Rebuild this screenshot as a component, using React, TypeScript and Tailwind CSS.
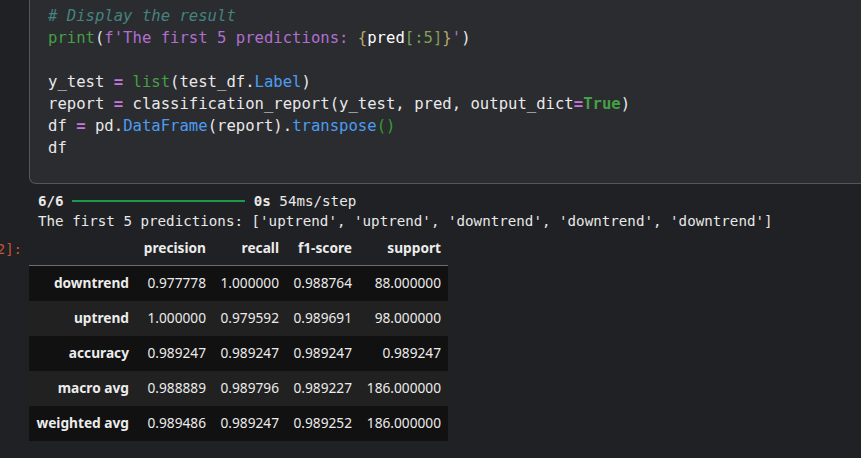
import React from 'react'

const codeFont = { fontFamily: '"DejaVu Sans Mono", "Liberation Mono", monospace' }
const outFont = { fontFamily: '"DejaVu Sans Mono", "Liberation Mono", monospace' }
const tableFont = { fontFamily: '"Noto Sans", "Open Sans", Roboto, sans-serif' }

const rows = [
  ['downtrend', '0.977778', '1.000000', '0.988764', '88.000000'],
  ['uptrend', '1.000000', '0.979592', '0.989691', '98.000000'],
  ['accuracy', '0.989247', '0.989247', '0.989247', '0.989247'],
  ['macro avg', '0.988889', '0.989796', '0.989227', '186.000000'],
  ['weighted avg', '0.989486', '0.989247', '0.989252', '186.000000'],
]

const colWidths = ['w-[107px]', 'w-[77px]', 'w-[73px]', 'w-[73px]', 'w-[89px]']

function CodeCell() {
  return (
    <div className="ml-[29px] -mr-[4px] border-l border-b border-[#54565b] rounded-bl-[7px] bg-[#2b2c30] pt-[5px] pb-[24px] pl-[18px]">
      <pre className="text-[15.6px] leading-[22px] text-[#e9e9e9] m-0 font-medium" style={codeFont}>
        <span className="italic text-[#44837f]"># Display the result</span>
        {'\n'}
        <span className="text-[#45a045]">print</span>
        <span>(</span>
        <span className="text-[#b26fd0]">f'The first 5 predictions: </span>
        <span className="text-[#b5a86a]">{'{'}</span>
        <span className="text-white">pred</span>
        <span className="text-[#7f9f55]">[:5]</span>
        <span className="text-[#b5a86a]">{'}'}</span>
        <span className="text-[#b26fd0]">'</span>
        <span>)</span>
        {'\n\n'}
        <span>y_test </span>
        <span className="text-[#c678dd] font-bold">=</span>
        <span> </span>
        <span className="text-[#45a045]">list</span>
        <span>(test_df.</span>
        <span className="text-[#4b9df2]">Label</span>
        <span>)</span>
        {'\n'}
        <span>report </span>
        <span className="text-[#c678dd] font-bold">=</span>
        <span> classification_report(y_test, pred, output_dict</span>
        <span className="text-[#c678dd] font-bold">=</span>
        <span className="text-[#45a045] font-bold">True</span>
        <span>)</span>
        {'\n'}
        <span>df </span>
        <span className="text-[#c678dd] font-bold">=</span>
        <span> pd.</span>
        <span className="text-[#4b9df2]">DataFrame</span>
        <span>(report).</span>
        <span className="text-[#4b9df2]">transpose</span>
        <span className="text-[#30a030]">()</span>
        {'\n'}
        <span>df</span>
      </pre>
    </div>
  )
}

function Output() {
  return (
    <div className="pl-[38px] pt-[7px] text-[14.2px] leading-[20px] text-[#e8e8e8] whitespace-pre" style={outFont}>
      <div className="flex items-center">
        <span className="font-bold">6/6</span>
        <span> </span>
        <span className="inline-block w-[173px] h-[2px] bg-[#1a9a4a]" />
        <span> </span>
        <span className="font-bold">0s</span>
        <span> 54ms/step</span>
      </div>
      <div>The first 5 predictions: ['uptrend', 'uptrend', 'downtrend', 'downtrend', 'downtrend']</div>
    </div>
  )
}

function ReportTable() {
  return (
    <div className="flex mt-[1px]">
      <div className="w-[29px] overflow-hidden flex justify-end pr-[7px] pt-[7px] h-[34px]">
        <span className="text-[14px] leading-[20px] text-[#c2563a] whitespace-nowrap" style={outFont}>[2]:</span>
      </div>
      <div className="text-[13.7px] text-[#ececec]" style={tableFont}>
        <div className="flex h-[34px] border-b border-[#6b6b6b] items-center font-bold">
          <div className={colWidths[0]} />
          {['precision', 'recall', 'f1-score', 'support'].map((h, i) => (
            <div key={h} className={`${colWidths[i + 1]} text-right pr-[7px]`}>{h}</div>
          ))}
        </div>
        {rows.map((r, ri) => (
          <div key={r[0]} className={`flex h-[35px] items-center ${ri % 2 === 0 ? 'bg-[#111111]' : 'bg-[#212121]'}`}>
            {r.map((c, i) => (
              <div key={i} className={`${colWidths[i]} text-right pr-[7px] ${i === 0 ? 'font-bold' : ''}`}>{c}</div>
            ))}
          </div>
        ))}
      </div>
    </div>
  )
}

export default function App() {
  return (
    <div className="w-[861px] h-[458px] bg-[#202124] overflow-hidden">
      <CodeCell />
      <Output />
      <ReportTable />
    </div>
  )
}
